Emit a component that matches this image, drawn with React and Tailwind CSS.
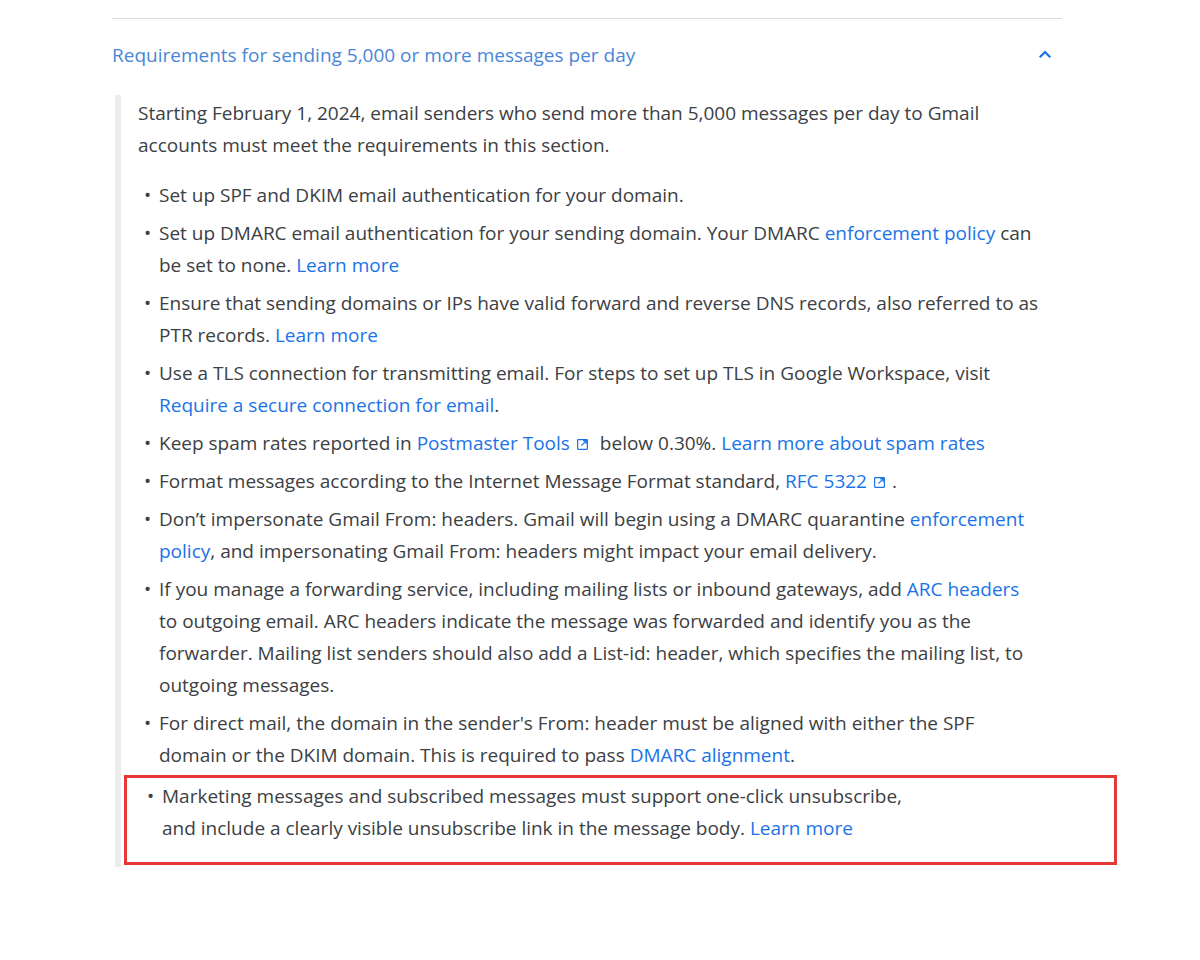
import React from "react";

const A = ({ children }) => <a className="text-[#1a73e8]">{children}</a>;

const Ext = () => (
  <svg className="inline-block mx-[6px] align-[-1px]" width="13" height="13" viewBox="0 0 24 24" fill="none" stroke="#1a73e8" strokeWidth="2.2">
    <rect x="3" y="3" width="18" height="18" rx="1" />
    <path d="M10 14L19 5M13 5h6v6" />
  </svg>
);

const Item = ({ children, boxed }) => (
  <li className={`flex ${boxed ? "pt-[2px] pb-[18px]" : ""}`}>
    <span className="w-[21px] shrink-0 pl-[6px]">•</span>
    <span className="w-[880px]">{children}</span>
  </li>
);

export default function App() {
  return (
    <div className="w-[1200px] h-[960px] bg-white text-[#3c4043] text-[19px] leading-[32px]" style={{ fontFamily: "'Open Sans', 'Liberation Sans', sans-serif" }}>
      <div className="ml-[112px] w-[950px] pt-[18px]">
        <div className="border-t border-[#dadce0]" />
        <div className="flex items-center justify-between pt-[20px] pb-[24px]">
          <span className="text-[#4a86d6] text-[19px]">Requirements for sending 5,000 or more messages per day</span>
          <svg className="mr-[8px]" width="18" height="18" viewBox="0 0 24 24" fill="none" stroke="#1a73e8" strokeWidth="3"><path d="M5 15l7-7 7 7" /></svg>
        </div>
      </div>
      <div className="ml-[115px] w-[1002px] border-l-[6px] border-[#ececec] pt-[2px] pb-[2px]">
        <p className="pl-[17px] w-[920px]">Starting February 1, 2024, email senders who send more than 5,000 messages per day to Gmail accounts must meet the requirements in this section.</p>
        <ul className="mt-[18px] pl-[17px] flex flex-col gap-[6px]">
          <Item>Set up SPF and DKIM email authentication for your domain.</Item>
          <Item>Set up DMARC email authentication for your sending domain. Your DMARC <A>enforcement policy</A> can be set to none. <A>Learn more</A></Item>
          <Item>Ensure that sending domains or IPs have valid forward and reverse DNS records, also referred to as PTR records. <A>Learn more</A></Item>
          <Item>Use a TLS connection for transmitting email. For steps to set up TLS in Google Workspace, visit <A>Require a secure connection for email</A>.</Item>
          <Item>Keep spam rates reported in <A>Postmaster Tools</A><Ext /> below 0.30%. <A>Learn more about spam rates</A></Item>
          <Item>Format messages according to the Internet Message Format standard, <A>RFC 5322</A><Ext />.</Item>
          <Item>Don’t impersonate Gmail From: headers. Gmail will begin using a DMARC quarantine <A>enforcement policy</A>, and impersonating Gmail From: headers might impact your email delivery.</Item>
          <Item>If you manage a forwarding service, including mailing lists or inbound gateways, add <A>ARC headers</A> to outgoing email. ARC headers indicate the message was forwarded and identify you as the forwarder. Mailing list senders should also add a List-id: header, which specifies the mailing list, to outgoing messages.</Item>
          <Item>For direct mail, the domain in the sender's From: header must be aligned with either the SPF domain or the DKIM domain. This is required to pass <A>DMARC alignment</A>.</Item>
        </ul>
        <div className="mt-[4px] ml-[3px] border-[3px] border-[#e53935] pl-[14px]">
          <ul><Item boxed>Marketing messages and subscribed messages must support one-click unsubscribe,<br />and include a clearly visible unsubscribe link in the message body. <A>Learn more</A></Item></ul>
        </div>
      </div>
    </div>
  );
}
